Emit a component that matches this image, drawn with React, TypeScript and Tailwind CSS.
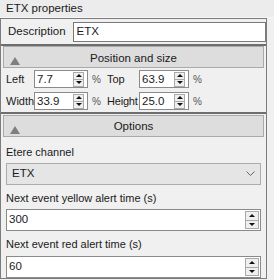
import React from 'react';

const Spinner = ({ h, w }: { h: string; w: string }) => (
  <div className={`flex flex-col ${w} ${h} border border-[#a9a9a9] bg-[#efefef]`}>
    <div className="flex-1 flex items-center justify-center border-b border-[#a9a9a9]">
      <div className="w-0 h-0 border-l-[3px] border-r-[3px] border-b-[3px] border-l-transparent border-r-transparent border-b-[#111]" />
    </div>
    <div className="flex-1 flex items-center justify-center">
      <div className="w-0 h-0 border-l-[3px] border-r-[3px] border-t-[3px] border-l-transparent border-r-transparent border-t-[#111]" />
    </div>
  </div>
);

const NumField = ({ value, className, spin, spinW }: { value: string; className: string; spin: string; spinW: string }) => (
  <div className={`flex items-center border border-[#8a8a8a] bg-white pl-[2px] text-[11.5px] ${className}`}>
    <span className="flex-1 leading-none">{value}</span>
    <Spinner h={spin} w={spinW} />
  </div>
);

const Header = ({ title, top }: { title: string; top: string }) => (
  <div className={`relative flex items-center justify-center h-[22px] mx-[2px] ${top} border border-[#a9a9a9] bg-[#dddddd] text-[11.5px]`}>
    <div className="absolute left-[6px] top-[10px] w-0 h-0 border-l-[5px] border-r-[5px] border-b-[8px] border-l-transparent border-r-transparent border-b-[#7f7f7f]" />
    <span className="pt-[2px]">{title}</span>
  </div>
);

const Pct = () => <span className="pl-[4px] text-[10px] text-[#555]">%</span>;

export default function App() {
  return (
    <div
      className="w-[274px] h-[280px] bg-[#f0f0f0] text-[11px] text-[#1a1a1a] overflow-hidden"
      style={{ fontFamily: '"Liberation Sans", Arial, sans-serif' }}
    >
      <div className="h-[18px] pl-[6px] flex items-center bg-[#ececec] border-b border-[#f7f7f7] text-[11.5px]">ETX properties</div>
      <div className="w-[267px] h-[261px] border border-[#7c7c7c] flex flex-col">
        <div className="flex items-center h-[27px] pl-[7px] gap-[7px]">
          <span className="text-[11.5px]">Description</span>
          <div className="w-[194px] h-[20px] border border-[#7a7a7a] bg-white flex items-center pl-[3px] text-[11.5px]">ETX</div>
        </div>
        <div className="h-[72px] border-t-2 border-[#6e6e6e]">
          <Header title="Position and size" top="mt-0" />
          <div className="grid grid-cols-[28px_54px_17px_34px_50px_14px] items-center gap-y-[4px] pl-[5px] pt-[2px]">
            <span>Left</span>
            <NumField value="7.7" className="h-[18px] pr-[3px]" spin="h-[15px]" spinW="w-[11px]" />
            <Pct />
            <span className="pl-[2px]">Top</span>
            <NumField value="63.9" className="h-[18px] pr-[3px]" spin="h-[15px]" spinW="w-[11px]" />
            <Pct />
            <span>Width</span>
            <NumField value="33.9" className="h-[18px] pr-[3px]" spin="h-[15px]" spinW="w-[11px]" />
            <Pct />
            <span className="pl-[2px] tracking-[-0.2px]">Height</span>
            <NumField value="25.0" className="h-[18px] pr-[3px]" spin="h-[15px]" spinW="w-[11px]" />
            <Pct />
          </div>
        </div>
        <div className="flex-1 border-t-2 border-[#6e6e6e]">
          <Header title="Options" top="mt-[1px]" />
          <div className="flex flex-col pl-[5px] pr-[5px] pt-[7px]">
            <span className="h-[16px] leading-[16px]">Etere channel</span>
            <div className="mt-[3px] h-[22px] border border-[#acacac] bg-[#e5e5e5] flex items-center justify-between pl-[5px] pr-[5px] text-[11.5px]">
              <span>ETX</span>
              <svg width="9" height="6" viewBox="0 0 9 6">
                <path d="M0.5 0.5 L4.5 4.5 L8.5 0.5" stroke="#666" fill="none" strokeWidth="1" />
              </svg>
            </div>
            <span className="mt-[5px] h-[16px] leading-[16px]">Next event yellow alert time (s)</span>
            <NumField value="300" className="mt-[3px] h-[22px] pr-[1px]" spin="h-[18px]" spinW="w-[14px]" />
            <span className="mt-[5px] h-[16px] leading-[16px]">Next event red alert time (s)</span>
            <NumField value="60" className="mt-[4px] h-[22px] pr-[1px]" spin="h-[18px]" spinW="w-[14px]" />
          </div>
        </div>
      </div>
    </div>
  );
}
